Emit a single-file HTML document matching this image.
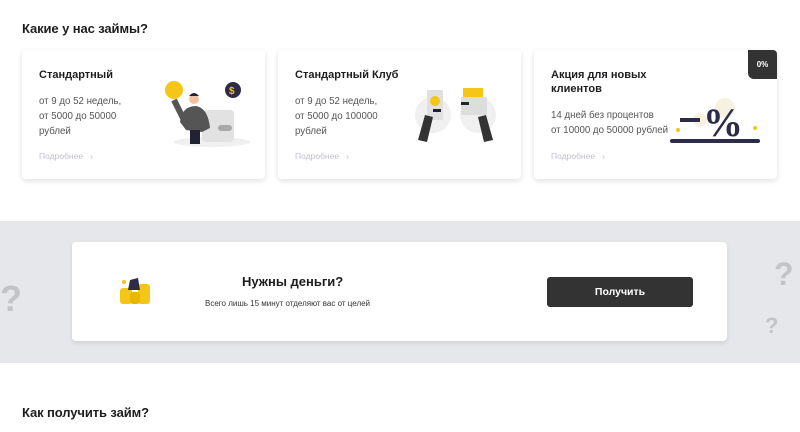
<!DOCTYPE html>
<html><head><meta charset="utf-8"><style>
*{margin:0;padding:0;box-sizing:border-box}
body{width:800px;height:432px;overflow:hidden;background:#fff;font-family:"Liberation Sans",sans-serif;color:#1d1d1f;position:relative}
.abs{position:absolute}
h2{position:absolute;left:22px;font-size:13px;font-weight:bold;letter-spacing:-.1px}
.card{position:absolute;top:50px;width:243px;height:129px;background:#fff;border-radius:4px;box-shadow:0 2px 6px rgba(0,0,0,.12)}
.card .t{position:absolute;left:17px;top:18px;font-size:11px;font-weight:bold;line-height:14px}
.card .b{position:absolute;left:17px;font-size:9.7px;color:#555;line-height:15px}
.card .m{position:absolute;left:17px;top:101px;font-size:8.5px;color:#c2c2cc}
.band{position:absolute;left:0;top:221px;width:800px;height:142px;background:#e6e7ea}
.inner{position:absolute;left:72px;top:242px;width:655px;height:99px;background:#fff;border-radius:4px;box-shadow:0 2px 5px rgba(0,0,0,.1)}
.q{position:absolute;color:#c4c4c8;font-weight:bold}
</style></head><body>
<h2 style="top:21px">Какие у нас займы?</h2>

<div class="card" style="left:22px">
<div class="t">Стандартный</div>
<div class="b" style="top:44px">от 9 до 52 недель,<br>от 5000 до 50000<br>рублей</div>
<div class="m">Подробнее &nbsp;&nbsp;›</div>
<svg class="abs" style="left:140px;top:30px" width="100" height="70">
<ellipse cx="50" cy="62" rx="38" ry="5" fill="#f0f0f0"/>
<rect x="40" y="30" width="32" height="32" rx="4" fill="#e2e2e2"/>
<rect x="56" y="45" width="14" height="6" rx="3" fill="#aaa"/>
<circle cx="12" cy="10" r="9" fill="#f5c518"/>
<circle cx="71" cy="10" r="8" fill="#2c2c4a"/>
<text x="67" y="14" font-size="10" fill="#f5c518" font-family="Liberation Sans" font-weight="bold">$</text>
<path d="M18 42 Q20 26 34 26 Q46 28 48 48 L40 52 L24 50 Z" fill="#555"/>
<path d="M22 40 L12 20" stroke="#555" stroke-width="6"/>
<rect x="28" y="50" width="10" height="14" fill="#223"/>
<circle cx="32" cy="19" r="5" fill="#f0c0a0"/>
<path d="M27 16 Q32 10 37 16Z" fill="#223"/>
</svg>
</div>

<div class="card" style="left:278px">
<div class="t">Стандартный Клуб</div>
<div class="b" style="top:44px">от 9 до 52 недель,<br>от 5000 до 100000<br>рублей</div>
<div class="m">Подробнее &nbsp;&nbsp;›</div>
<svg class="abs" style="left:135px;top:35px" width="85" height="60">
<circle cx="20" cy="30" r="18" fill="#f0f0f0"/><circle cx="65" cy="30" r="18" fill="#f0f0f0"/>
<rect x="14" y="5" width="16" height="30" rx="2" fill="#e0e0e0"/>
<circle cx="22" cy="16" r="5" fill="#f5c518"/>
<rect x="20" y="24" width="8" height="3" fill="#223"/>
<rect x="50" y="3" width="20" height="12" fill="#f5c518"/>
<rect x="48" y="12" width="26" height="18" rx="2" fill="#ddd"/>
<rect x="48" y="17" width="8" height="3" fill="#223"/>
<path d="M5 55 L12 30 L20 32 L14 57Z" fill="#333"/><path d="M80 55 L73 30 L65 32 L71 57Z" fill="#333"/>
</svg>
</div>

<div class="card" style="left:534px">
<div class="t">Акция для новых<br>клиентов</div>
<div class="b" style="top:58px">14 дней без процентов<br>от 10000 до 50000 рублей</div>
<div class="m">Подробнее &nbsp;&nbsp;›</div>
<div class="abs" style="right:0;top:0;width:29px;height:29px;background:#333;border-radius:0 4px 0 6px;color:#fff;font-size:8px;font-weight:bold;text-align:center;line-height:29px">0%</div>
<svg class="abs" style="left:136px;top:40px" width="95" height="55">
<circle cx="55" cy="18" r="10" fill="#f6f1e0"/><circle cx="30" cy="30" r="7" fill="#f6f1e0"/>
<rect x="10" y="28" width="20" height="4" fill="#2c2c4a"/>
<text x="33" y="46" font-size="40" font-family="Liberation Serif" font-weight="bold" fill="#2c2c4a">%</text>
<rect x="0" y="49" width="90" height="4" rx="2" fill="#2c2c4a"/>
<circle cx="8" cy="40" r="2" fill="#f5c518"/><circle cx="85" cy="38" r="2" fill="#f5c518"/>
</svg>
</div>

<div class="band"></div>
<div class="q" style="left:0;top:278px;font-size:36px">?</div>
<div class="q" style="left:774px;top:256px;font-size:32px">?</div>
<div class="q" style="left:765px;top:313px;font-size:22px">?</div>
<div class="inner">
<svg class="abs" style="left:44px;top:34px" width="40" height="30">
<circle cx="8" cy="6" r="2" fill="#f5c518"/>
<rect x="4" y="12" width="12" height="16" rx="3" fill="#f5c518"/>
<rect x="22" y="8" width="12" height="20" rx="3" fill="#f5c518"/>
<path d="M12 14 L14 4 L22 2 L24 14Z" fill="#2c2c4a"/>
<rect x="14" y="16" width="10" height="12" rx="3" fill="#e8b800"/>
</svg>
<div class="abs" style="left:170px;top:32px;font-size:13px;font-weight:bold">Нужны деньги?</div>
<div class="abs" style="left:133px;top:57px;font-size:8px;color:#333">Всего лишь 15 минут отделяют вас от целей</div>
<div class="abs" style="left:475px;top:35px;width:146px;height:30px;background:#333;border-radius:3px;color:#fff;font-size:10.5px;font-weight:bold;text-align:center;line-height:30px">Получить</div>
</div>

<h2 style="top:405px">Как получить займ?</h2>
</body></html>
